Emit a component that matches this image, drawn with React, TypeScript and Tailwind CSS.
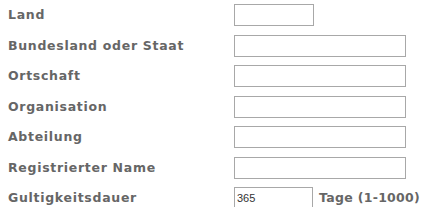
const FIELDS = [
  { label: "Land", short: true },
  { label: "Bundesland oder Staat" },
  { label: "Ortschaft" },
  { label: "Organisation" },
  { label: "Abteilung" },
  { label: "Registrierter Name" },
];

export default function App() {
  return (
    <div className="w-[423px] h-[207px] bg-white overflow-hidden pt-[4px] pl-[8px] font-['DejaVu_Sans',sans-serif]">
      {FIELDS.map((f) => (
        <div key={f.label} className="flex items-start h-[30.5px]">
          <div className="w-[226px] shrink-0 pt-[3px] text-[12.5px] font-bold tracking-[0.7px] text-[#666] leading-[15px]">{f.label}</div>
          <input
            type="text"
            className={`h-[22px] border border-[#a8a8a8] bg-white outline-none ${f.short ? "w-[80px]" : "w-[172px]"}`}
          />
        </div>
      ))}
      <div className="flex items-start h-[30.5px]">
        <div className="w-[226px] shrink-0 pt-[3px] text-[12.5px] font-bold tracking-[0.7px] text-[#666] leading-[15px]">Gultigkeitsdauer</div>
        <input
          type="text"
          defaultValue="365"
          className="h-[22px] w-[79px] shrink-0 border border-[#a8a8a8] bg-white outline-none px-[2px] text-[11px] text-[#333] font-['Liberation_Sans',sans-serif]"
        />
        <div className="pl-[6px] pt-[3px] text-[12.5px] font-bold tracking-[0.3px] text-[#666] leading-[15px] whitespace-nowrap">Tage (1-1000)</div>
      </div>
    </div>
  );
}
